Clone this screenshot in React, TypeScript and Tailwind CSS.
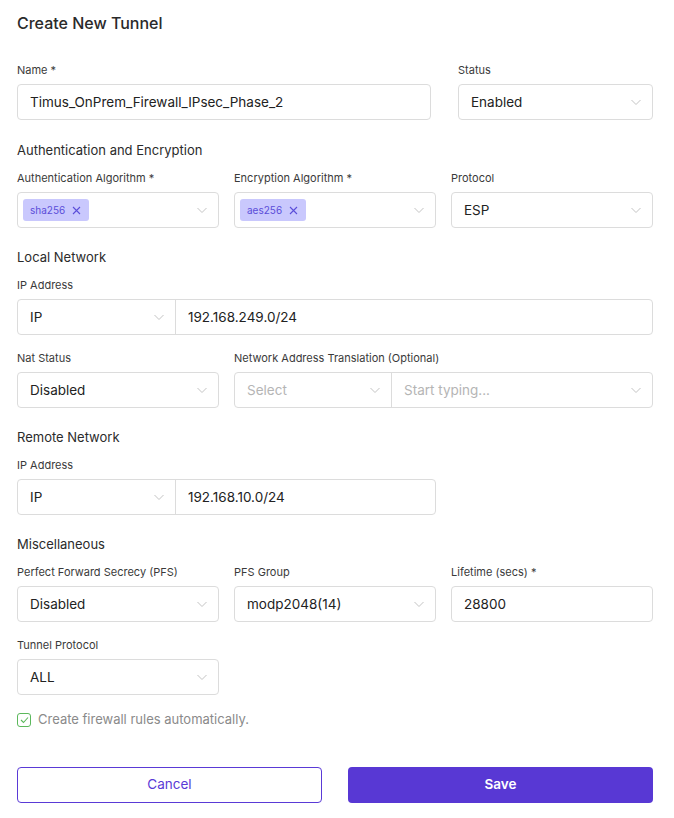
import React from 'react';

const Chevron = () => (
  <svg width="12" height="12" viewBox="0 0 12 12" fill="none" className="shrink-0">
    <path d="M1.5 4l4.5 4.5L10.5 4" stroke="#c4c4c4" strokeWidth="1" />
  </svg>
);

const Label = ({ children }: { children: React.ReactNode }) => (
  <div className="text-[11px] text-[#3a3a3a] mb-[7px] leading-[14px]">{children}</div>
);

const Section = ({ children }: { children: React.ReactNode }) => (
  <div className="text-[13px] text-[#2b2b2b] leading-[16px]">{children}</div>
);

const Select = ({ value, placeholder }: { value?: string; placeholder?: string }) => (
  <div className="h-[36px] border border-[#dcdcdc] rounded-[4px] flex items-center justify-between pl-[12px] pr-[10px] bg-white">
    <span className={`text-[13.5px] ${value ? 'text-[#222]' : 'text-[#b5b5b5]'}`}>{value || placeholder}</span>
    <Chevron />
  </div>
);

const Tag = ({ text }: { text: string }) => (
  <span className="inline-flex items-center gap-[7px] h-[22px] pl-[7px] pr-[8px] rounded-[3px] bg-[#c9c8fd] text-[#5b4ed9] text-[10px]">
    {text}
    <svg width="9" height="9" viewBox="0 0 9 9"><path d="M1 1l7 7M8 1L1 8" stroke="#5b4ed9" strokeWidth="1.1" /></svg>
  </span>
);

const TagSelect = ({ tag }: { tag: string }) => (
  <div className="h-[36px] border border-[#dcdcdc] rounded-[4px] flex items-center justify-between pl-[5px] pr-[10px]">
    <Tag text={tag} />
    <Chevron />
  </div>
);

const IpGroup = ({ ip }: { ip: string }) => (
  <div className="h-[36px] border border-[#dcdcdc] rounded-[4px] flex">
    <div className="w-[158px] flex items-center justify-between pl-[12px] pr-[10px] border-r border-[#dcdcdc]">
      <span className="text-[13.5px] text-[#222]">IP</span>
      <Chevron />
    </div>
    <div className="flex-1 flex items-center pl-[12px] text-[13.5px] text-[#222]">{ip}</div>
  </div>
);

export default function App() {
  return (
    <main className="w-[674px] min-h-[818px] bg-white px-[17px] pt-[13px] font-['Inter','Noto_Sans',sans-serif]">
      <h1 className="text-[16px] font-medium text-[#2a2a2a] leading-[20px]">Create New Tunnel</h1>

      <div className="flex justify-between w-[636px] mt-[30px]">
        <div className="w-[414px]">
          <Label>Name *</Label>
          <div className="h-[36px] border border-[#dcdcdc] rounded-[4px] flex items-center pl-[12px] text-[13.5px] text-[#222]">
            Timus_OnPrem_Firewall_IPsec_Phase_2
          </div>
        </div>
        <div className="w-[195px]">
          <Label>Status</Label>
          <Select value="Enabled" />
        </div>
      </div>

      <div className="mt-[22px] w-[636px]">
        <Section>Authentication and Encryption</Section>
        <div className="grid grid-cols-3 gap-x-[15px] mt-[13px]">
          <div>
            <Label>Authentication Algorithm *</Label>
            <TagSelect tag="sha256" />
          </div>
          <div>
            <Label>Encryption Algorithm *</Label>
            <TagSelect tag="aes256" />
          </div>
          <div>
            <Label>Protocol</Label>
            <Select value="ESP" />
          </div>
        </div>
      </div>

      <div className="mt-[21px] w-[636px]">
        <Section>Local Network</Section>
        <div className="mt-[13px]">
          <Label>IP Address</Label>
          <IpGroup ip="192.168.249.0/24" />
        </div>
        <div className="grid grid-cols-3 gap-x-[15px] mt-[16px]">
          <div>
            <Label>Nat Status</Label>
            <Select value="Disabled" />
          </div>
          <div className="col-span-2">
            <Label>Network Address Translation (Optional)</Label>
            <div className="h-[36px] border border-[#dcdcdc] rounded-[4px] flex">
              <div className="w-[157px] flex items-center justify-between pl-[12px] pr-[10px] border-r border-[#dcdcdc]">
                <span className="text-[13.5px] text-[#b5b5b5]">Select</span>
                <Chevron />
              </div>
              <div className="flex-1 flex items-center justify-between pl-[12px] pr-[10px]">
                <span className="text-[13.5px] text-[#b5b5b5]">Start typing...</span>
                <Chevron />
              </div>
            </div>
          </div>
        </div>
      </div>

      <div className="mt-[21px] w-[636px]">
        <Section>Remote Network</Section>
        <div className="mt-[13px] w-[419px]">
          <Label>IP Address</Label>
          <IpGroup ip="192.168.10.0/24" />
        </div>
      </div>

      <div className="mt-[21px] w-[636px]">
        <Section>Miscellaneous</Section>
        <div className="grid grid-cols-3 gap-x-[15px] mt-[13px]">
          <div>
            <Label>Perfect Forward Secrecy (PFS)</Label>
            <Select value="Disabled" />
          </div>
          <div>
            <Label>PFS Group</Label>
            <Select value="modp2048(14)" />
          </div>
          <div>
            <Label>Lifetime (secs) *</Label>
            <div className="h-[36px] border border-[#dcdcdc] rounded-[4px] flex items-center pl-[12px] text-[13.5px] text-[#222]">28800</div>
          </div>
          <div className="mt-[16px]">
            <Label>Tunnel Protocol</Label>
            <Select value="ALL" />
          </div>
        </div>
      </div>

      <label className="flex items-center gap-[7px] mt-[15px]">
        <span className="w-[14px] h-[14px] rounded-[3px] border border-[#5cb85c] flex items-center justify-center">
          <svg width="9" height="8" viewBox="0 0 9 8"><path d="M1 4l2.5 2.5L8 1.5" stroke="#5cb85c" strokeWidth="1.1" fill="none" /></svg>
        </span>
        <span className="text-[13px] text-[#8a8a8a]">Create firewall rules automatically.</span>
      </label>

      <div className="flex justify-between w-[636px] mt-[37px]">
        <button className="w-[305px] h-[36px] rounded-[4px] border border-[#5a3ad6] text-[#5a3ad6] text-[13.5px]">Cancel</button>
        <button className="w-[305px] h-[36px] rounded-[4px] bg-[#5838d4] text-white text-[13.5px] font-semibold">Save</button>
      </div>
    </main>
  );
}
